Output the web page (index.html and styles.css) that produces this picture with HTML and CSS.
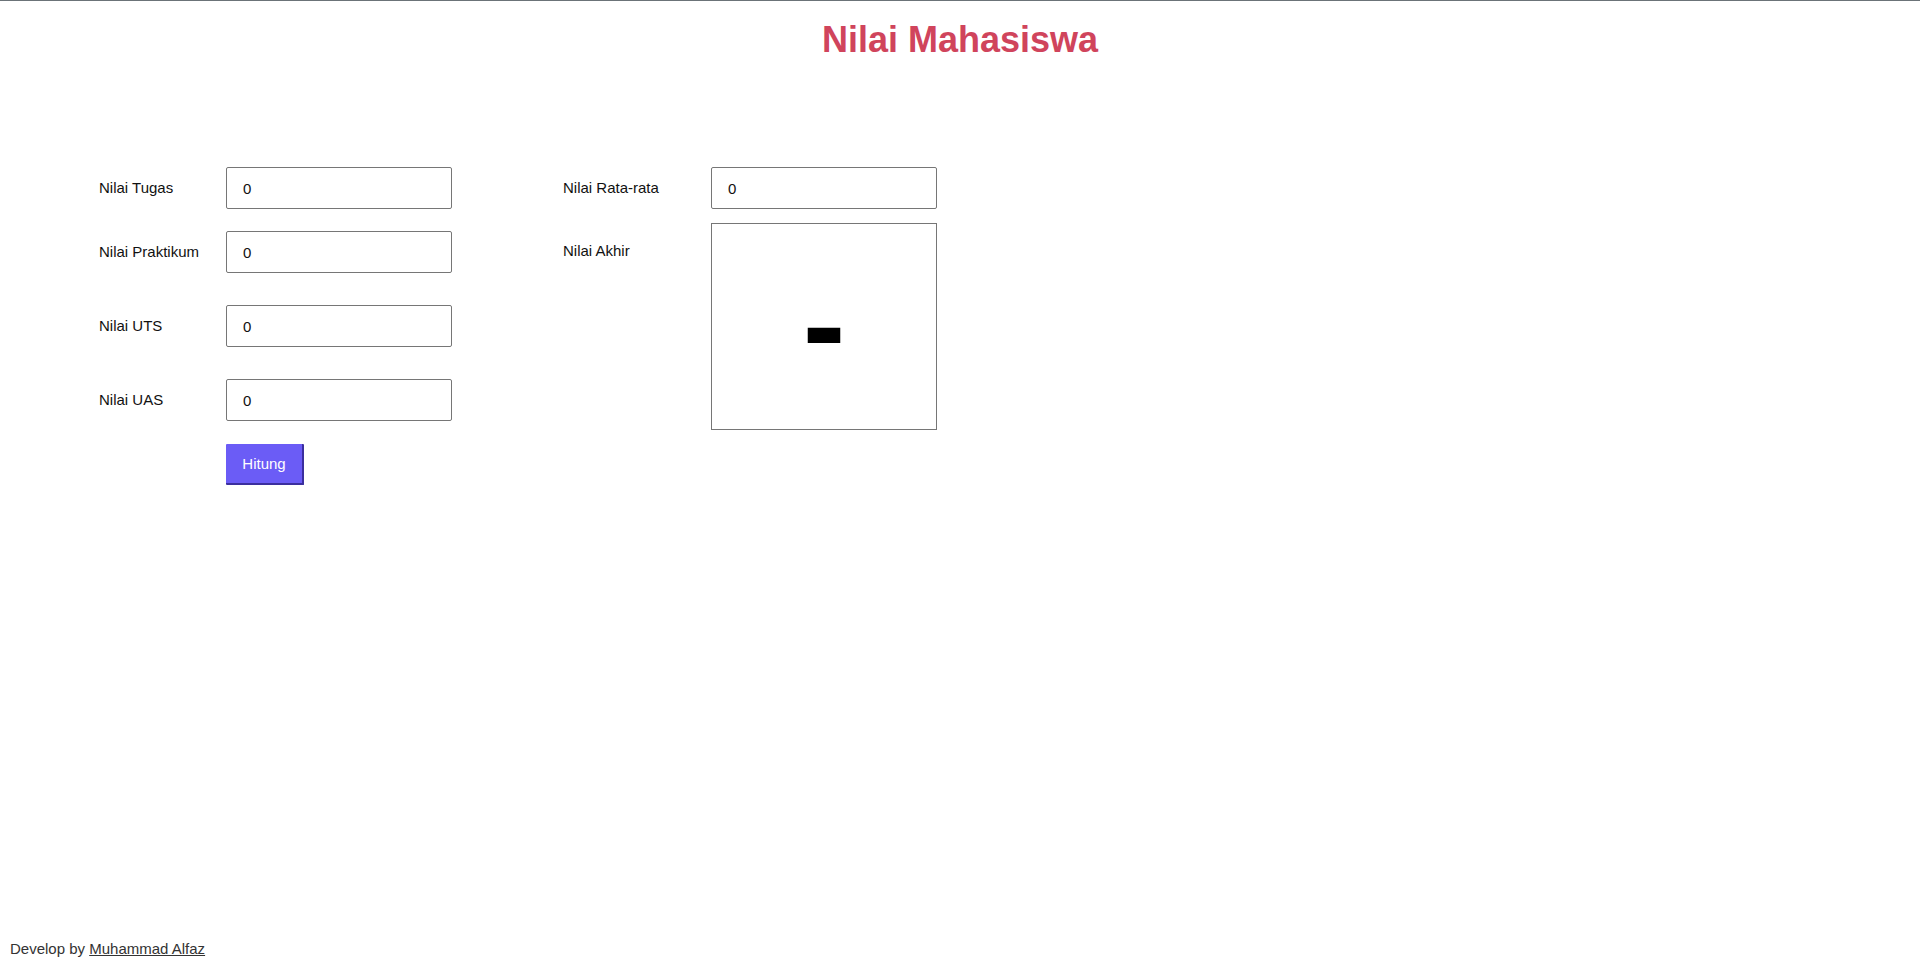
FILE: index.html
```html
<!DOCTYPE html>
<html lang="id">
<head>
<meta charset="utf-8">
<title>Nilai Mahasiswa</title>
<link rel="stylesheet" href="styles.css">
</head>
<body>
<div class="page">
  <h1 class="title">Nilai Mahasiswa</h1>
  <main class="content">
    <section class="form-left">
      <div class="row row-1">
        <label class="label" for="tugas">Nilai Tugas</label>
        <input class="field" id="tugas" type="text" value="0">
      </div>
      <div class="row row-2">
        <label class="label" for="praktikum">Nilai Praktikum</label>
        <input class="field" id="praktikum" type="text" value="0">
      </div>
      <div class="row row-3">
        <label class="label" for="uts">Nilai UTS</label>
        <input class="field" id="uts" type="text" value="0">
      </div>
      <div class="row row-4">
        <label class="label" for="uas">Nilai UAS</label>
        <input class="field" id="uas" type="text" value="0">
      </div>
      <div class="row row-btn">
        <span class="label"></span>
        <button class="btn" type="button">Hitung</button>
      </div>
    </section>
    <section class="form-right">
      <div class="row row-1 wide">
        <label class="label" for="rata">Nilai Rata-rata</label>
        <input class="field" id="rata" type="text" value="0">
      </div>
      <div class="row row-akhir wide">
        <span class="label label-top">Nilai Akhir</span>
        <div class="grade-box"><span class="grade">-</span></div>
      </div>
    </section>
  </main>
  <footer class="footer">Develop by <a class="footer-link" href="#">Muhammad Alfaz</a></footer>
</div>
</body>
</html>
```
FILE: styles.css
```css
* { box-sizing: border-box; }
html, body { margin: 0; padding: 0; }
body {
  font-family: "Liberation Sans", Arial, sans-serif;
  color: #111;
  background: #fff;
  border-top: 1px solid #6b7378;
}
.page {
  min-height: 969px;
  display: flex;
  flex-direction: column;
}
.title {
  margin: 18px 0 0;
  text-align: center;
  font-size: 36px;
  font-weight: bold;
  color: #d0445c;
  line-height: 41px;
}
.content {
  display: flex;
  padding-left: 99px;
  margin-top: 107px;
  gap: 111px;
}
.form-left, .form-right {
  display: flex;
  flex-direction: column;
}
.row {
  display: grid;
  grid-template-columns: 127px 226px;
  align-items: center;
}
.row.wide { grid-template-columns: 148px 226px; }
.row-2 { margin-top: 22px; }
.row-3 { margin-top: 32px; }
.row-4 { margin-top: 32px; }
.row-btn { margin-top: 23px; }
.row-akhir { margin-top: 14px; align-items: start; }
.label {
  font-size: 15px;
  color: #111;
  margin-top: -1px;
}
.label-top { margin-top: 0; padding-top: 19px; }
.field {
  width: 226px;
  height: 42px;
  border: 1px solid #767676;
  border-radius: 2px;
  padding: 0 16px;
  font-family: "Liberation Sans", Arial, sans-serif;
  font-size: 15px;
  color: #111;
  background: #fff;
}
.btn {
  width: 78px;
  height: 41px;
  background: #6b5cf6;
  color: #fff;
  border: none;
  border-right: 2px solid #3b2f9e;
  border-bottom: 2px solid #3b2f9e;
  border-radius: 1px;
  font-family: "Liberation Sans", Arial, sans-serif;
  font-size: 15px;
  padding: 0;
}
.grade-box {
  width: 226px;
  height: 207px;
  border: 1px solid #767676;
  display: flex;
  align-items: center;
  justify-content: center;
}
.grade {
  font-size: 128px;
  font-weight: bold;
  line-height: 1;
  color: #000;
  transform: translateY(-2px);
}
.footer {
  margin-top: auto;
  padding: 0 0 13px 10px;
  font-size: 15px;
  color: #333;
}
.footer-link { color: #333; }
```
